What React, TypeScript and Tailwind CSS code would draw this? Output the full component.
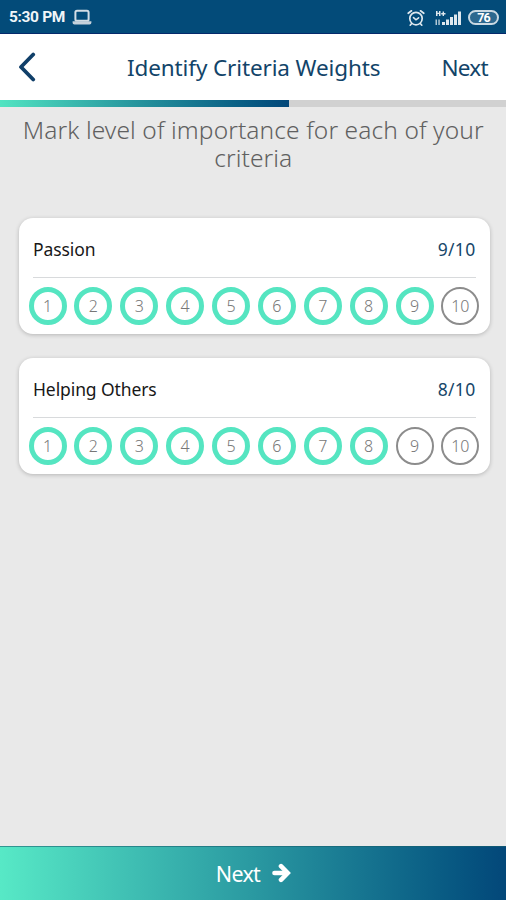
const LEVELS = [1, 2, 3, 4, 5, 6, 7, 8, 9, 10];

function LaptopIcon() {
  return (
    <svg className="ml-[7px] h-[17px] w-[20px]" viewBox="0 0 20 17" fill="none">
      <rect x="3.4" y="1.8" width="13.2" height="10" rx="1.6" stroke="#d3dde5" strokeWidth="2" />
      <path d="M0.6 12.200h18.800v1.600q0 1.800-1.800 1.800h-15.200q-1.800 0-1.800-1.800z" fill="#c5d1db" />
    </svg>
  );
}

function AlarmIcon() {
  return (
    <svg className="h-[18px] w-[18px]" viewBox="0 0 18 18" fill="none" stroke="#dfe8ee" strokeLinecap="round">
      <circle cx="9" cy="9.6" r="6.2" strokeWidth="1.7" />
      <path d="M1.2 4.3 4.500 1.800M16.800 4.300l-3.300-2.500M4.500 14.700l-1.300 1.500M13.500 14.700l1.300 1.500" strokeWidth="1.7" />
      <path d="M6.500 8.600 9 10.800l2.600-2" strokeWidth="1.600" />
    </svg>
  );
}

function SignalIcon() {
  return (
    <svg className="ml-[9px] h-[18px] w-[28px]" viewBox="0 0 28 18" fill="#dfe8ee">
      <path d="M2 2h1.500v1.800h1.500V2h1.500v5H5V5H3.500v2H2zM8.600 2.500h1.400v1.500h1.500v1.400H10v1.500H8.600V5.400H7.200V4h1.400z" />
      <path d="M1.500 10.500H3V16H1.500zM4.300 10.500h1.500V16H4.300z" opacity=".8" />
      <path d="M8 13h3v3H8zM12 10.500h3V16h-3zM16 8h3v8h-3zM20 5.500h3V16h-3zM24 2.500h3V16h-3z" />
    </svg>
  );
}

function StatusBar() {
  return (
    <div className="flex h-[34px] items-center border-b border-[#05296b] bg-[#034b79] pt-[2px] pr-[7px] pl-[9px] text-[#f0f5f8]">
      <span className="pt-px font-['Roboto',sans-serif] text-[15.5px] leading-none font-bold tracking-[-0.35px] whitespace-nowrap">
        5:30 PM
      </span>
      <LaptopIcon />
      <div className="ml-auto flex items-center">
        <AlarmIcon />
        <SignalIcon />
        <div className="ml-[6px] flex h-[15px] w-[31px] items-center justify-center rounded-full border-2 border-[#cad9e3] bg-[#2c688f] pt-px font-['Roboto',sans-serif] text-[12.500px] leading-none font-bold tracking-[-0.8px] text-white">
          76
        </div>
      </div>
    </div>
  );
}

function Header() {
  return (
    <header className="flex h-[66px] items-center bg-white pr-[18px] pl-[18px] text-[#124469]">
      <svg className="h-[30px] w-[18px]" viewBox="0 0 18 30" fill="none">
        <path d="M15.200 2.500 3 15l12.200 12.500" stroke="#103f69" strokeWidth="3.800" strokeLinecap="round" strokeLinejoin="round" />
      </svg>
      <h1 className="ml-[91px] pt-[2px] text-[22.500px] leading-none tracking-[-0.12px] whitespace-nowrap">
        Identify Criteria Weights
      </h1>
      <button className="ml-auto pt-[2px] text-[22.500px] leading-none tracking-[-0.7px] whitespace-nowrap">Next</button>
    </header>
  );
}

function CriterionCard({ name, score }: { name: string; score: number }) {
  return (
    <section className="h-[116px] rounded-[14px] bg-white px-[10px] shadow-[0_1px_4px_rgba(0,0,0,0.22)]">
      <div className="mx-[4px] flex h-[60px] items-center justify-between border-b border-[#d8dadc] pt-[4px] text-[17.500px] leading-none">
        <h2 className="pl-[0.5px] tracking-[-0.1px] text-[#181818]">{name}</h2>
        <span className="tracking-[0.3px] text-[#17476a]">{score}/10</span>
      </div>
      <div className="mt-[9px] flex justify-between">
        {LEVELS.map((level) => (
          <button
            key={level}
            className={`flex size-[38px] items-center justify-center rounded-full text-[16px] leading-none font-light text-[#777] ${
              level <= score ? "border-[5.500px] border-[#55e5c1]" : "border-2 border-[#8c8c8c]"
            }`}
          >
            {level}
          </button>
        ))}
      </div>
    </section>
  );
}

export default function App() {
  return (
    <div className="flex h-[900px] w-[506px] flex-col overflow-hidden bg-[#e9e9e9] font-['Noto_Sans',sans-serif]">
      <StatusBar />
      <Header />
      <div className="h-[7px] shrink-0 bg-[#d1d1d1]">
        <div className="h-full w-[289px] bg-linear-to-r from-[#52e4c1] via-[#24909b] to-[#034779]" />
      </div>
      <main className="flex-1 pr-[16.500px] pl-[18.500px]">
        <p className="mr-[1.500px] pt-[9px] text-center text-[24.500px] leading-[28px] font-light tracking-[0.1px] text-[#606060]">
          Mark level of importance for each of your criteria
        </p>
        <div className="mt-[46px] flex flex-col gap-[24px]">
          <CriterionCard name="Passion" score={9} />
          <CriterionCard name="Helping Others" score={8} />
        </div>
      </main>
      <button className="flex h-[54px] shrink-0 items-center justify-center gap-[12px] border-t border-[#17616f]/60 bg-linear-to-r from-[#57e9c6] via-[#2a99a1] to-[#034779] pl-px text-[21.500px] leading-none text-white">
        <span className="tracking-[-0.7px]">Next</span>
        <svg className="mb-px h-[20px] w-[19px]" viewBox="0 0 19 20" fill="none" stroke="currentColor" strokeWidth="4.600">
          <path d="M2.500 10h12" strokeLinecap="round" />
          <path d="M9 3.200 15.700 10 9 16.800" strokeLinecap="round" strokeLinejoin="miter" />
        </svg>
      </button>
    </div>
  );
}
